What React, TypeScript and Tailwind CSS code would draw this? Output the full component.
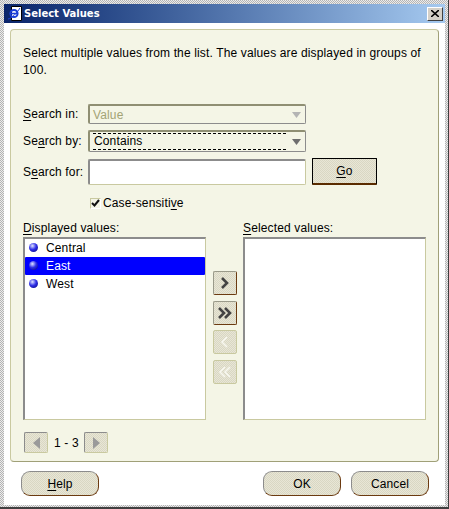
import React from "react";

const dither = "bg-[conic-gradient(#e8e6d6_25%,#d9d7c3_0_50%,#e8e6d6_0_75%,#d9d7c3_0)] bg-[length:2px_2px]";

function Mn({ children }: { children: React.ReactNode }) {
  return <span className="underline underline-offset-2">{children}</span>;
}

function Label({ children }: { children: React.ReactNode }) {
  return <label className="block whitespace-nowrap">{children}</label>;
}

function Caret({ color }: { color: string }) {
  return (
    <svg width="9" height="6" viewBox="0 0 9 6" className="shrink-0">
      <path d="M0 0H9L4.5 6Z" fill={color} />
    </svg>
  );
}

function Dropdown({ value, disabled }: { value: string; disabled?: boolean }) {
  return (
    <div
      className={`flex w-[218px] items-center rounded-[2px] border-2 border-r border-b border-t-[#8f8f73] border-l-[#8f8f73] border-r-[#8c8c8c] border-b-[#8c8c8c] pr-[4px] ${
        disabled ? "h-[20px] text-[#a3a375]" : "h-[22px] text-black"
      }`}
    >
      <div className="flex-1 pl-[3px]">
        {disabled ? (
          value
        ) : (
          <div className="mt-px mr-[2px] mb-px border-y border-dashed border-black pl-px leading-[15px]">{value}</div>
        )}
      </div>
      <div className="ml-[4px]">
        <Caret color={disabled ? "#b4b4b4" : "#6e6e6e"} />
      </div>
    </div>
  );
}

function ArrowButton({ d, disabled }: { d: string[]; disabled?: boolean }) {
  return (
    <button
      className={`flex h-[24px] w-[24px] items-center justify-center rounded-[2px] border ${dither} ${
        disabled
          ? "border-[#c9c9a0]"
          : "border-t-[#9a9a8a] border-l-[#9a9a8a] border-r-[#6b3a10] border-b-[#6b3a10]"
      }`}
    >
      <svg width="16" height="14" viewBox="0 0 16 14">
        {d.map((p) => (
          <path
            key={p}
            d={p}
            fill="none"
            stroke={disabled ? "#f8f8f0" : "#444444"}
            strokeWidth={disabled ? 1.5 : 2.6}
          />
        ))}
      </svg>
    </button>
  );
}

function PageButton({ dir }: { dir: "left" | "right" }) {
  return (
    <button
      className={`flex h-[21px] w-[24px] items-center justify-center rounded-[2px] border border-t-[#8c8c8c] border-l-[#8c8c8c] border-r-[#c9c9a0] border-b-[#c9c9a0] ${dither}`}
    >
      <svg width="7" height="12" viewBox="0 0 7 12">
        <path d={dir === "left" ? "M7 0V12L0 6Z" : "M0 0V12L7 6Z"} fill="#9a9a9a" />
      </svg>
    </button>
  );
}

function PillButton({ children }: { children: React.ReactNode }) {
  return (
    <button
      className={`h-[25px] w-[78px] rounded-[9px] border border-t-[#8c8c8c] border-l-[#8c8c8c] border-r-[#6b3a10] border-b-[#6b3a10] text-center text-black ${dither}`}
    >
      {children}
    </button>
  );
}

function Bullet() {
  return (
    <span className="mb-[2px] h-[9px] w-[9px] shrink-0 rounded-full bg-[radial-gradient(circle_at_38%_32%,#dfe4ff,#3030e8_45%,#000070)]" />
  );
}

const values = ["Central", "East", "West"];

export default function App() {
  return (
    <div
      className="flex h-[509px] w-[449px] flex-col overflow-hidden border-r border-b-2 border-[#404040] bg-[conic-gradient(#ececec_25%,#b4b4b4_0_50%,#ececec_0_75%,#b4b4b4_0)] bg-[length:2px_2px] pt-[4px] pr-[3px] pb-[2px] pl-[4px] text-[12px] leading-[14px] tracking-[0.14px] text-black"
      style={{ fontFamily: '"Liberation Sans", Arial, sans-serif' }}
    >
      <div className="flex h-[19px] shrink-0 items-center bg-gradient-to-r from-[#0a246a] to-[#a6caf0] pr-[2px] pl-[3px]">
        <svg width="16" height="17" viewBox="0 0 16 17" className="shrink-0">
          <path d="M4.5 1.5H14.5V15.5H4.5Z" fill="#fff" stroke="#000" />
          <circle cx="7" cy="8.5" r="3.6" fill="none" stroke="#1c3fd8" strokeWidth="2" />
          <path d="M3.5 8.5H10.5" stroke="#1c3fd8" strokeWidth="1.6" />
          <path d="M1 14C4 14 10 8 13 3" fill="none" stroke="#1c3fd8" strokeWidth="1" />
        </svg>
        <span
          className="ml-px flex-1 text-[10px] font-bold tracking-normal text-white"
          style={{ fontFamily: '"DejaVu Sans", sans-serif' }}
        >
          Select Values
        </span>
        <button className="flex h-[14px] w-[16px] items-center justify-center border border-t-white border-l-white border-r-[#404040] border-b-[#404040] bg-[#d4d0c8]">
          <svg width="8" height="7" viewBox="0 0 8 7">
            <path d="M0 0L8 7M8 0L0 7" stroke="#000" strokeWidth="1.6" />
          </svg>
        </button>
      </div>

      <div className="flex flex-1 flex-col bg-white px-[6px] pt-[6px]">
        <div className="h-[433px] shrink-0 rounded-[4px] border border-t-[#c9c9a0] border-l-[#c9c9a0] border-r-[#a0a078] border-b-[#a0a078] bg-[#f4f5e6] pt-[15px] pr-[12px] pl-[12px]">
          <p className="h-[59px] leading-[17px]">
            Select multiple values from the list. The values are displayed in groups of 100.
          </p>

          <div className="grid grid-cols-[65px_auto_1fr] items-center gap-y-[6px]">
            <Label>
              <Mn>S</Mn>earch in:
            </Label>
            <Dropdown value="Value" disabled />
            <div />
            <Label>
              Se<Mn>a</Mn>rch by:
            </Label>
            <Dropdown value="Contains" />
            <div />
            <Label>
              S<Mn>e</Mn>arch for:
            </Label>
            <input className="h-[26px] w-[218px] rounded-[2px] border-2 border-r border-b border-t-[#8c8c8c] border-l-[#8c8c8c] border-r-[#c9c9a0] border-b-[#c9c9a0] bg-white" />
            <button
              className={`ml-[6px] h-[27px] w-[65px] rounded-[1px] border border-b-2 border-black border-b-[#5a2c00] text-center ${dither}`}
            >
              <Mn>G</Mn>o
            </button>
          </div>

          <div className="mt-[11px] ml-[67px] flex h-[14px] items-center">
            <span className="flex h-[11px] w-[11px] items-center justify-center border border-t-[#c9c9a0] border-l-[#c9c9a0] border-r-white border-b-white bg-[#f4f5e6]">
              <svg width="9" height="8" viewBox="0 0 9 8">
                <path d="M1 4L3.5 6.5L8 1" fill="none" stroke="#111" strokeWidth="2" />
              </svg>
            </span>
            <span className="ml-[2px]">
              Case-sensiti<Mn>v</Mn>e
            </span>
          </div>

          <div className="mt-[11px] flex">
            <div className="w-[183px]">
              <div className="h-[16px]">
                <Mn>D</Mn>isplayed values:
              </div>
              <div className="h-[183px] border-2 border-r border-b border-t-[#8c8c8c] border-l-[#8c8c8c] border-r-[#c9c9a0] border-b-[#c9c9a0] bg-white">
                {values.map((v) => (
                  <div
                    key={v}
                    className={`flex h-[18px] items-center gap-[8px] rounded-[1px] pl-[4px] ${
                      v === "East" ? "bg-[#0000ff] text-white" : ""
                    }`}
                  >
                    <Bullet />
                    <span>{v}</span>
                  </div>
                ))}
              </div>
            </div>

            <div className="flex w-[37px] flex-col items-center gap-[5.5px] pt-[50px]">
              <ArrowButton d={["M5 2L10 7L5 12"]} />
              <ArrowButton d={["M2 2L7 7L2 12", "M8 2L13 7L8 12"]} />
              <ArrowButton d={["M10 2L5 7L10 12"]} disabled />
              <ArrowButton d={["M8 2L3 7L8 12", "M13 2L8 7L13 12"]} disabled />
            </div>

            <div className="w-[183px]">
              <div className="h-[16px]">
                <Mn>S</Mn>elected values:
              </div>
              <div className="h-[183px] border-2 border-r border-b border-t-[#8c8c8c] border-l-[#8c8c8c] border-r-[#c9c9a0] border-b-[#c9c9a0] bg-white" />
            </div>
          </div>

          <div className="mt-[12px] flex items-center pl-px">
            <PageButton dir="left" />
            <span className="mx-[6px] w-[24px] whitespace-nowrap">1 - 3</span>
            <PageButton dir="right" />
          </div>
        </div>

        <div className="mt-[9px] flex pr-[10px] pl-[11px]">
          <PillButton>
            <Mn>H</Mn>elp
          </PillButton>
          <div className="ml-auto flex gap-[10px]">
            <PillButton>OK</PillButton>
            <PillButton>Cancel</PillButton>
          </div>
        </div>
      </div>
    </div>
  );
}
